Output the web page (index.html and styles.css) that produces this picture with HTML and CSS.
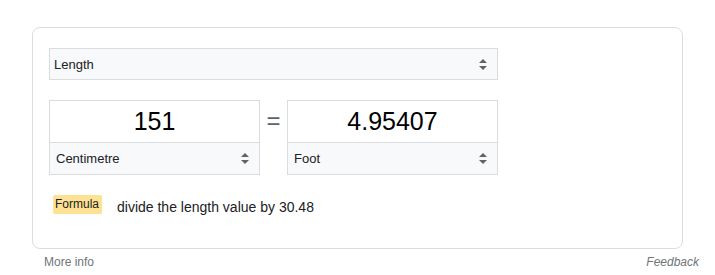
FILE: index.html
```html
<!DOCTYPE html>
<html lang="en">
<head>
  <meta charset="UTF-8">
  <meta name="viewport" content="width=device-width, initial-scale=1.0">
  <title>Unit Converter</title>
  <link rel="stylesheet" href="styles.css">
</head>
<body>
  <div id="page">
    <div class="card">
      <div class="picker picker-wide">
        <span>Length</span>
        <svg class="chevron" width="8" height="11" viewBox="0 0 8 11"><path d="M4 0L8 4H0z M4 11L0 7H8z" fill="#5f6368"/></svg>
      </div>

      <div class="convert-row">
        <div class="unit-box">
          <div class="unit-value">151</div>
          <div class="picker">
            <span>Centimetre</span>
            <svg class="chevron" width="8" height="11" viewBox="0 0 8 11"><path d="M4 0L8 4H0z M4 11L0 7H8z" fill="#5f6368"/></svg>
          </div>
        </div>
        <div class="equals">=</div>
        <div class="unit-box">
          <div class="unit-value">4.95407</div>
          <div class="picker">
            <span>Foot</span>
            <svg class="chevron" width="8" height="11" viewBox="0 0 8 11"><path d="M4 0L8 4H0z M4 11L0 7H8z" fill="#5f6368"/></svg>
          </div>
        </div>
      </div>

      <div class="formula">
        <span class="badge">Formula</span>
        <span class="formula-text">divide the length value by 30.48</span>
      </div>
    </div>

    <div class="footer">
      <span>More info</span>
      <span class="feedback">Feedback</span>
    </div>
  </div>
</body>
</html>
```

FILE: styles.css
```css
body {
  margin: 0;
  background-color: white;
  color: #202124;
  font-family: "Liberation Sans", Arial, sans-serif;
}

#page {
  width: 667px;
  padding: 27px 0 0 32px;
}

.card {
  width: 651px;
  height: 222px;
  box-sizing: border-box;
  border: 1px solid #dadce0;
  border-radius: 8px;
  padding: 20px 16px 0 16px;
}

.picker {
  display: flex;
  align-items: center;
  justify-content: space-between;
  height: 31px;
  background-color: #f8f9fa;
  padding: 0 10px 0 6px;
  font-size: 13px;
}

.picker-wide {
  width: 449px;
  height: 32px;
  box-sizing: border-box;
  border: 1px solid #dadce0;
  padding-left: 4px;
  padding-right: 10px;
}

.chevron {
  display: block;
}

.convert-row {
  display: flex;
  margin-top: 20px;
  width: 449px;
}

.unit-box {
  width: 211px;
  box-sizing: border-box;
  border: 1px solid #dadce0;
}

.unit-value {
  height: 41px;
  border-bottom: 1px solid #dadce0;
  display: flex;
  align-items: center;
  justify-content: center;
  font-size: 25px;
  color: #000;
  background-color: white;
}

.equals {
  width: 27px;
  text-align: center;
  font-size: 24px;
  color: #5f6368;
  line-height: 42px;
}

.formula {
  display: flex;
  align-items: center;
  margin-top: 19px;
  padding-left: 4px;
}

.badge {
  background-color: #fde293;
  border-radius: 2px;
  font-size: 12px;
  padding: 2px 3px 3px 2px;
}

.formula-text {
  font-size: 14px;
  margin-left: 15px;
  padding-top: 5px;
}

.footer {
  display: flex;
  justify-content: space-between;
  padding-left: 12px;
  margin-top: 6px;
  font-size: 12px;
  color: #70757a;
}

.feedback {
  font-style: italic;
}
```
